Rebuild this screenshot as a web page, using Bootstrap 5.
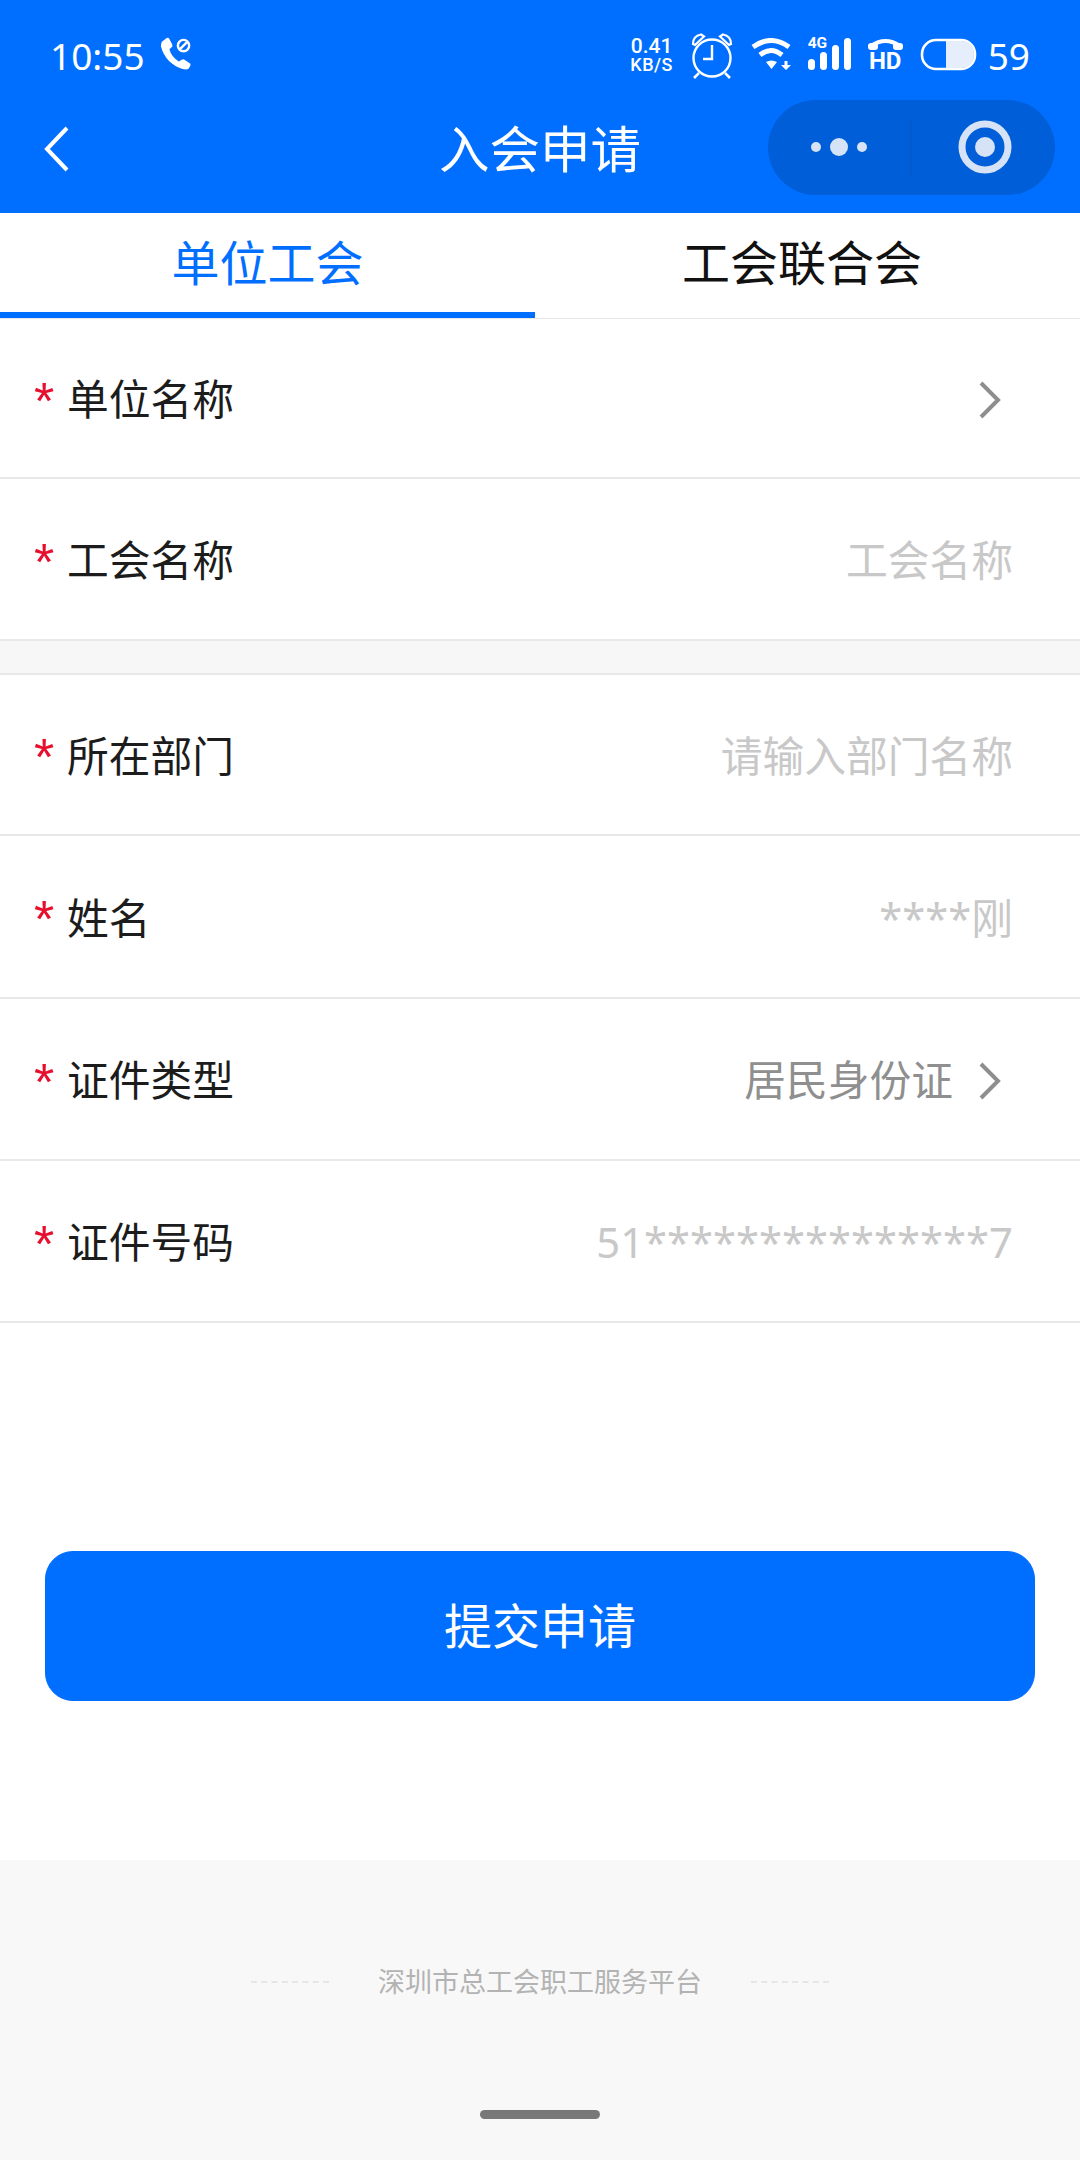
<!doctype html>
<html lang="zh-CN">
  <head>
    <meta charset="UTF-8" />
    <meta name="viewport" content="width=device-width, initial-scale=1.0" />
    <title>入会申请</title>
    <link href="https://cdn.jsdelivr.net/npm/bootstrap@5.3.0/dist/css/bootstrap.min.css" rel="stylesheet" />
    <style>
      body {
        font-family: "Noto Sans", "Noto Sans CJK SC", sans-serif;
        background-color: #fff;
        color: #1c1c1c;
      }

      /* header */
      .app-head {
        background-color: #006fff;
        color: #fff;
        height: 213px;
      }
      .status-bar {
        height: 100px;
        padding: 33px 50px 0 50px;
      }
      .clock {
        font-size: 37px;
        line-height: 1;
        margin-top: 4px;
      }
      .call-icon {
        margin-left: 15px;
        margin-top: 4px;
      }
      .stat-icons {
        gap: 17px;
      }
      .speed {
        font-family: Roboto, sans-serif;
        font-weight: 500;
        line-height: 1;
        text-align: center;
        width: 44px;
        margin-top: 3px;
      }
      .speed-top {
        font-size: 21px;
        height: 20px;
      }
      .speed-low {
        font-size: 18px;
        letter-spacing: 0.5px;
      }
      .stat-low {
        margin-top: 5px;
      }
      .net-wrap,
      .hd-wrap {
        position: relative;
        height: 32px;
      }
      .net-label {
        position: absolute;
        left: 0;
        top: -2px;
        font-family: Roboto, sans-serif;
        font-weight: 700;
        font-size: 15.5px;
        line-height: 1;
      }
      .hd-label {
        position: absolute;
        left: 0;
        right: 0;
        bottom: 0;
        text-align: center;
        font-family: Roboto, sans-serif;
        font-weight: 700;
        font-size: 24px;
        line-height: 17px;
      }
      .batt-num {
        font-size: 37px;
        line-height: 1;
        margin-top: 4px;
        margin-left: -6px;
      }
      .title-bar {
        height: 113px;
        padding-top: 25px;
        position: relative;
      }
      .back-icon {
        display: block;
        margin-left: 44px;
      }
      .page-title {
        position: absolute;
        left: 439px;
        top: 0;
        line-height: 97px;
        font-size: 50.5px;
      }
      .capsule {
        position: absolute;
        left: 768px;
        top: 0;
        width: 287px;
        height: 95px;
        border-radius: 48px;
        background-color: #005ed8;
      }

      /* tabs */
      .tab-bar {
        height: 106px;
        border-bottom: 1px solid #e8e8e8;
      }
      .tab-link {
        height: 105px;
        line-height: 99px;
        font-size: 48px;
        color: #111;
        text-decoration: none;
        padding: 0 11px 0 0;
      }
      .tab-on {
        color: #006fff;
        flex: 0 0 535px;
        padding: 0;
        border-bottom: 6px solid #006fff;
      }

      /* form rows */
      .list-group-flush > .form-row-item,
      .list-group-flush > .form-row-item:last-child {
        height: 162px;
        padding: 3px 67px 0 34px;
        font-size: 41.75px;
        border-color: #e8e8e8;
        border-width: 0 0 2px;
        color: #1c1c1c;
      }
      .list-group-flush > .row-first {
        height: 160px;
      }
      .list-group-flush > .row-third {
        height: 161px;
      }
      .list-group-flush > .row-fourth {
        height: 163px;
      }
      .req-mark {
        color: #e60f2d;
        font-family: "Liberation Sans", sans-serif;
        font-size: 52px;
        width: 33px;
        line-height: 1;
        margin-top: 2px;
      }
      .row-hint {
        color: #c8c8c8;
      }
      .row-value {
        color: #8f8f8f;
      }
      .row-chevron {
        margin-left: 25px;
        margin-right: 11px;
      }
      .row-gap {
        height: 34px;
        background-color: #f7f7f7;
        border-bottom: 2px solid #e8e8e8;
      }

      /* submit */
      .submit-wrap {
        padding: 228px 45px 159px;
      }
      .submit-btn {
        height: 150px;
        font-size: 48px;
        border-radius: 28px;
        background-color: #006fff;
        border-color: #006fff;
      }

      /* footer */
      .foot-area {
        height: 300px;
        background-color: #f8f8f8;
        padding-top: 103px;
      }
      .foot-text {
        font-size: 27px;
        line-height: 38px;
        color: #b3b3b3;
        margin: 0 49px;
      }
      .foot-dash {
        width: 78px;
        border-top: 2px dashed #e6e6e6;
      }
      .home-bar {
        width: 120px;
        height: 9px;
        border-radius: 5px;
        background-color: #787878;
        margin: 109px auto 0;
      }
    </style>
  </head>

  <body>
    <!-- Header -->
    <header class="app-head">
      <div class="status-bar d-flex justify-content-between align-items-start">
        <div class="d-flex align-items-start">
          <span class="clock">10:55</span>
          <svg class="call-icon" width="32" height="34" viewBox="0 0 34 36" fill="none">
            <path d="M2 5 L7 1 Q9 0 10 2 L13 8 Q14 10 12 11 L10 13 Q12 21 20 26 L23 24 Q25 23 26 24 L32 28 Q33 29 32 31 L30 34 Q28 35 24 34 Q6 28 1 10 Q1 7 2 5 Z" fill="#fff" />
            <circle cx="25" cy="9" r="6" stroke="#fff" stroke-width="2.6" />
            <path d="M21 13 L29 5" stroke="#fff" stroke-width="2.6" />
          </svg>
        </div>
        <div class="d-flex align-items-start stat-icons">
          <div class="speed">
            <div class="speed-top">0.41</div>
            <div class="speed-low">KB/S</div>
          </div>
          <svg width="43" height="46" viewBox="0 0 43 46" fill="none" stroke="#fff">
            <circle cx="21" cy="25" r="18.500" stroke-width="2.4" />
            <path d="M21 12 V26 H12" stroke-width="2.4" />
            <path d="M2 11 Q2 3 10 1.500 L13 3.500 L4 12 Z M40 11 Q40 3 32 1.500 L29 3.500 L38 12 Z" stroke-width="2.2" />
            <path d="M8 40 L3 45 M34 40 L39 45" stroke-width="2.6" />
          </svg>
          <svg class="stat-low" width="40" height="32" viewBox="0 0 40 32" fill="none" stroke="#fff">
            <path d="M2 9 Q20 -4 38 9" stroke-width="5" />
            <path d="M9 17 Q20 8 31 17" stroke-width="5" />
            <path d="M15 24 Q20.500 21 26 24 L20.500 31 Z" fill="#fff" stroke="none" />
            <path d="M33.500 23 H36.500 V27 H40 L35 32 L30 27 H33.500 Z" fill="#fff" stroke="none" />
          </svg>
          <div class="net-wrap stat-low">
            <span class="net-label">4G</span>
            <svg width="43" height="32" viewBox="0 0 43 32" fill="#fff" class="d-block">
              <rect x="0" y="21" width="7" height="11" rx="3.500" />
              <rect x="12" y="14" width="7" height="18" rx="3.500" />
              <rect x="24" y="7" width="7" height="25" rx="3.500" />
              <rect x="36" y="0" width="7" height="32" rx="3.500" />
            </svg>
          </div>
          <div class="hd-wrap stat-low">
            <svg width="35" height="13" viewBox="0 0 35 13" fill="#fff" class="d-block">
              <path d="M3 8 Q17.500 -2 32 8" fill="none" stroke="#fff" stroke-width="4" />
              <rect x="0" y="5" width="10" height="7" rx="3" />
              <rect x="25" y="5" width="10" height="7" rx="3" />
            </svg>
            <span class="hd-label">HD</span>
          </div>
          <svg class="stat-low" width="57" height="33" viewBox="0 0 57 33" fill="none">
            <rect x="2" y="2" width="53" height="29" rx="14" stroke="#fff" stroke-width="2.6" />
            <path d="M26 3 H41 Q54 3 54 16.500 Q54 30 41 30 H26 Z" fill="#e6eefb" />
          </svg>
          <span class="batt-num">59</span>
        </div>
      </div>
      <div class="title-bar">
        <svg class="back-icon" width="26" height="48" viewBox="0 0 26 48" fill="none" stroke="#fff" stroke-width="4">
          <path d="M23 3 L3 24 L23 45" />
        </svg>
        <div class="page-title">入会申请</div>
        <div class="capsule">
          <svg width="287" height="95" viewBox="0 0 287 95">
            <g fill="#d6e3f7">
              <circle cx="48" cy="47" r="5" />
              <circle cx="71" cy="47" r="9" />
              <circle cx="94" cy="47" r="5" />
              <circle cx="217" cy="47" r="10" />
            </g>
            <path d="M143 20 V76" stroke="#0a55c0" stroke-width="1" />
            <circle cx="217" cy="47" r="23" fill="none" stroke="#d6e3f7" stroke-width="7" />
          </svg>
        </div>
      </div>
    </header>

    <!-- Tabs -->
    <nav class="nav tab-bar">
      <a class="nav-link tab-link tab-on text-center" href="#">单位工会</a>
      <a class="nav-link tab-link flex-fill text-center" href="#">工会联合会</a>
    </nav>

    <!-- Form -->
    <div class="list-group list-group-flush">
      <div class="list-group-item form-row-item row-first d-flex align-items-center">
        <span class="req-mark">*</span><span>单位名称</span>
        <svg class="row-chevron ms-auto" width="24" height="38" viewBox="0 0 24 38" fill="none" stroke="#8e8e8e" stroke-width="4">
          <path d="M3 2 L20 19 L3 36" />
        </svg>
      </div>
      <div class="list-group-item form-row-item d-flex align-items-center">
        <span class="req-mark">*</span><span>工会名称</span>
        <span class="row-hint ms-auto">工会名称</span>
      </div>
    </div>
    <div class="row-gap"></div>
    <div class="list-group list-group-flush">
      <div class="list-group-item form-row-item row-third d-flex align-items-center">
        <span class="req-mark">*</span><span>所在部门</span>
        <span class="row-hint ms-auto">请输入部门名称</span>
      </div>
      <div class="list-group-item form-row-item row-fourth d-flex align-items-center">
        <span class="req-mark">*</span><span>姓名</span>
        <span class="row-hint ms-auto">****刚</span>
      </div>
      <div class="list-group-item form-row-item d-flex align-items-center">
        <span class="req-mark">*</span><span>证件类型</span>
        <span class="row-value ms-auto">居民身份证</span>
        <svg class="row-chevron" width="24" height="38" viewBox="0 0 24 38" fill="none" stroke="#8e8e8e" stroke-width="4">
          <path d="M3 2 L20 19 L3 36" />
        </svg>
      </div>
      <div class="list-group-item form-row-item d-flex align-items-center">
        <span class="req-mark">*</span><span>证件号码</span>
        <span class="row-hint ms-auto">51***************7</span>
      </div>
    </div>

    <!-- Submit -->
    <div class="submit-wrap">
      <button type="button" class="btn btn-primary w-100 submit-btn">提交申请</button>
    </div>

    <!-- Footer -->
    <footer class="foot-area">
      <div class="d-flex justify-content-center align-items-center">
        <span class="foot-dash"></span>
        <span class="foot-text">深圳市总工会职工服务平台</span>
        <span class="foot-dash"></span>
      </div>
      <div class="home-bar"></div>
    </footer>

    <script src="https://cdn.jsdelivr.net/npm/bootstrap@5.3.0/dist/js/bootstrap.bundle.min.js"></script>
  </body>
</html>
